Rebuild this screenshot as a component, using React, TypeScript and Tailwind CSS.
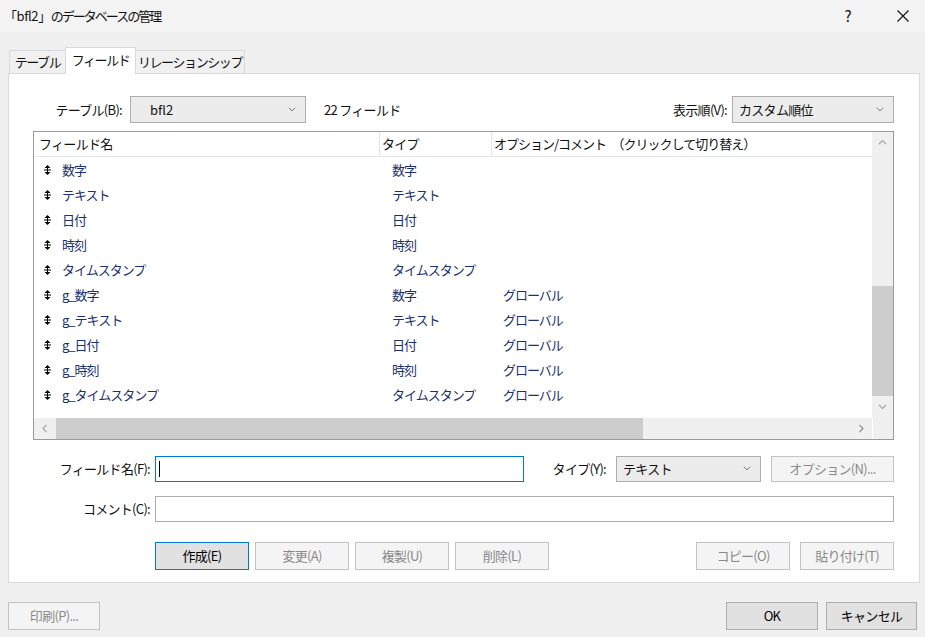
import React from 'react';

const font = { fontFamily: '"Noto Sans CJK JP", "Noto Sans", sans-serif' };

const rows = [
  { name: '数字', type: '数字', opt: '' },
  { name: 'テキスト', type: 'テキスト', opt: '' },
  { name: '日付', type: '日付', opt: '' },
  { name: '時刻', type: '時刻', opt: '' },
  { name: 'タイムスタンプ', type: 'タイムスタンプ', opt: '' },
  { name: 'g_数字', type: '数字', opt: 'グローバル' },
  { name: 'g_テキスト', type: 'テキスト', opt: 'グローバル' },
  { name: 'g_日付', type: '日付', opt: 'グローバル' },
  { name: 'g_時刻', type: '時刻', opt: 'グローバル' },
  { name: 'g_タイムスタンプ', type: 'タイムスタンプ', opt: 'グローバル' },
];

const Chevron: React.FC<{ dir: 'up' | 'down' | 'left' | 'right'; className?: string }> = ({ dir, className }) => {
  const pts = {
    up: '1,5 4.5,1.5 8,5',
    down: '1,2 4.5,5.5 8,2',
    left: '5.5,1 2,4.5 5.5,8',
    right: '2.5,1 6,4.5 2.5,8',
  }[dir];
  return (
    <svg width="9" height="9" viewBox="0 0 9 9" className={className}>
      <polyline points={pts} fill="none" stroke="currentColor" strokeWidth="1.1" />
    </svg>
  );
};

const MoveIcon = () => (
  <svg width="7" height="10" viewBox="0 0 7 10">
    <polygon points="3.5,0 0.5,3 6.5,3" fill="#000" />
    <rect x="0" y="4.5" width="7" height="1" fill="#000" />
    <rect x="3" y="2" width="1" height="6" fill="#000" />
    <polygon points="0.5,7 6.5,7 3.5,10" fill="#000" />
  </svg>
);

const Select: React.FC<{ value: string; className: string }> = ({ value, className }) => (
  <div className={`flex items-center justify-between bg-[#ececec] border border-[#adadad] pr-[9px] shrink-0 ${className}`}>
    <span>{value}</span>
    <Chevron dir="down" className="text-[#707070] w-[8px] h-[8px]" />
  </div>
);

const Btn: React.FC<{ label: string; disabled?: boolean; primary?: boolean; className?: string }> = ({ label, disabled, primary, className = 'w-[94px]' }) => (
  <button
    className={`h-[28px] flex items-center justify-center border shrink-0 ${
      disabled
        ? 'bg-[#f4f4f4] border-[#c4c4c4] text-[#8a8a8a]'
        : primary
        ? 'bg-[#e1e1e1] border-[#0078d7] text-black'
        : 'bg-[#e1e1e1] border-[#adadad] text-black'
    } ${className}`}
  >
    {label}
  </button>
);

export default function App() {
  return (
    <div style={font} className="w-[925px] h-[637px] bg-[#f0f0f0] text-[13px] tracking-[-0.7px] text-[#111] whitespace-nowrap flex flex-col overflow-hidden">
      {/* title bar */}
      <div className="h-[32px] flex items-center bg-[#f3f3f3] pl-[4px]">
        <span className="text-[13px]">
          <span className="tracking-[-0.4px]">「bfl2」</span>
          <span className="tracking-[-2px]">のデータベースの管理</span>
        </span>
        <span className="ml-auto text-[15px] mr-[46px]">?</span>
        <svg width="12" height="12" viewBox="0 0 12 12" className="mr-[16px]">
          <path d="M0.5 0.5 L11.5 11.5 M11.5 0.5 L0.5 11.5" stroke="#111" strokeWidth="1.1" />
        </svg>
      </div>

      {/* tabs */}
      <div className="flex items-end mt-[14px] pl-[9px] h-[27px] relative z-10 text-[13px] tracking-[-1.4px]">
        <div className="h-[23px] w-[57px] flex items-center justify-center border border-b-0 border-[#d9d9d9] bg-[#f0f0f0]">テーブル</div>
        <div className="h-[27px] w-[71px] flex items-start justify-center pt-[2px] border border-b-0 border-[#d9d9d9] bg-white -mx-px mb-[-1px]">フィールド</div>
        <div className="h-[23px] w-[110px] flex items-center justify-center border border-b-0 border-[#d9d9d9] bg-[#f0f0f0]">リレーションシップ</div>
      </div>

      {/* panel */}
      <div className="ml-[8px] w-[912px] h-[510px] bg-white border border-[#d9d9d9] pl-[24px] pr-[25px] flex flex-col">
        <div className="flex items-center h-[27px] mt-[22px]">
          <div className="w-[89px] text-right">テーブル(B):</div>
          <Select value="bfl2" className="ml-[8px] w-[176px] h-[27px] pl-[19px] tracking-normal" />
          <span className="ml-[18px]">22 フィールド</span>
          <span className="ml-auto">表示順(V):</span>
          <Select value="カスタム順位" className="ml-[5px] w-[162px] h-[27px] pl-[6px]" />
        </div>

        {/* list */}
        <div className="mt-[8px] h-[309px] border border-[#9a9a9a] flex flex-col">
          <div className="flex flex-1 min-h-0">
            <div className="flex-1 flex flex-col">
              <div className="h-[25px] flex items-center border-b border-[#e5e5e5] shrink-0">
                <div className="w-[346px] pl-[5px] border-r border-[#e5e5e5] h-full flex items-center">フィールド名</div>
                <div className="w-[112px] pl-[2px] border-r border-[#e5e5e5] h-full flex items-center">タイプ</div>
                <div className="pl-[2px] tracking-[-1px]">オプション/コメント　（クリックして切り替え）</div>
              </div>
              {rows.map((r) => (
                <div key={r.name} className="h-[25px] flex items-center text-[#1c2f6e] tracking-[-1px] shrink-0">
                  <div className="w-[346px] flex items-center pl-[10px]">
                    <MoveIcon />
                    <span className="ml-[11px]">{r.name}</span>
                  </div>
                  <div className="w-[112px] pl-[12px]">{r.type}</div>
                  <div className="pl-[11px]">{r.opt}</div>
                </div>
              ))}
            </div>
            {/* vertical scrollbar */}
            <div className="w-[21px] bg-[#f0f0f0] flex flex-col">
              <div className="h-[22px] flex items-center justify-center text-[#a3a3a3]">
                <Chevron dir="up" />
              </div>
              <div className="h-[132px]" />
              <div className="h-[110px] bg-[#cdcdcd]" />
              <div className="flex-1 flex items-center justify-center text-[#a3a3a3]">
                <Chevron dir="down" />
              </div>
            </div>
          </div>
          {/* horizontal scrollbar */}
          <div className="h-[21px] flex shrink-0">
            <div className="flex-1 bg-[#f0f0f0] flex">
              <div className="w-[22px] flex items-center justify-center text-[#a3a3a3]">
                <Chevron dir="left" />
              </div>
              <div className="w-[587px] bg-[#cdcdcd]" />
              <div className="flex-1" />
              <div className="w-[22px] flex items-center justify-center text-[#8a8a8a]">
                <Chevron dir="right" />
              </div>
            </div>
            <div className="w-[21px] bg-[#f0f0f0] border-l border-white" />
          </div>
        </div>

        {/* field name row */}
        <div className="flex items-center h-[26px] mt-[16px]">
          <div className="w-[117px] text-right shrink-0">フィールド名(F):</div>
          <div className="ml-[5px] w-[369px] h-[26px] border border-[#0078d7] bg-white flex items-center pl-[3px] shrink-0">
            <div className="w-px h-[16px] bg-black" />
          </div>
          <div className="flex-1" />
          <span className="shrink-0">タイプ(Y):</span>
          <Select value="テキスト" className="ml-[10px] w-[145px] h-[26px] pl-[6px]" />
          <Btn label="オプション(N)..." disabled className="ml-[10px] w-[123px] !h-[26px]" />
        </div>

        {/* comment row */}
        <div className="flex items-center h-[26px] mt-[14px]">
          <div className="w-[117px] text-right shrink-0">コメント(C):</div>
          <div className="ml-[5px] flex-1 h-[26px] border border-[#adadad] bg-white" />
        </div>

        {/* action buttons */}
        <div className="flex items-center mt-[20px] pl-[122px] gap-[6px]">
          <Btn label="作成(E)" primary />
          <Btn label="変更(A)" disabled />
          <Btn label="複製(U)" disabled />
          <Btn label="削除(L)" disabled />
          <div className="flex-1" />
          <Btn label="コピー(O)" disabled />
          <Btn label="貼り付け(T)" disabled className="ml-[4px] w-[94px]" />
        </div>
      </div>

      {/* footer */}
      <div className="flex items-center mt-[19px] px-[8px]">
        <Btn label="印刷(P)..." disabled className="w-[92px]" />
        <div className="flex-1" />
        <Btn label="OK" className="w-[92px]" />
        <Btn label="キャンセル" className="ml-[8px] w-[91px]" />
      </div>
    </div>
  );
}
